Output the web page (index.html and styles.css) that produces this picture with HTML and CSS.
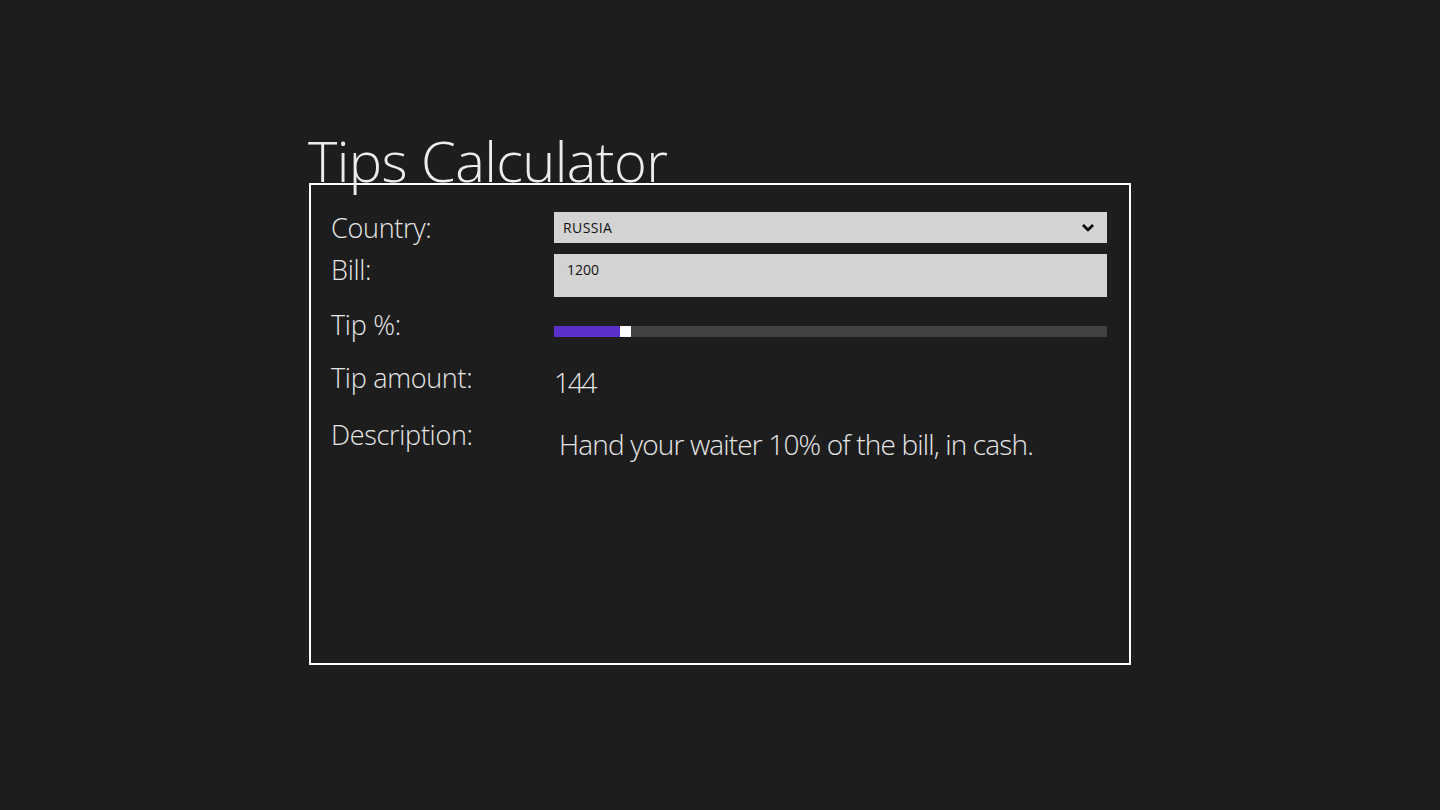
FILE: index.html
```html
<!DOCTYPE html>
<html>
<head>
<meta charset="utf-8">
<link rel="stylesheet" href="styles.css">
</head>
<body>
<main class="page">
  <h1 class="title">Tips Calculator</h1>
  <section class="panel">
    <div class="row row-country">
      <div class="label">Country:</div>
      <div class="select">
        <span class="select-text">RUSSIA</span>
        <svg class="chevron" width="14" height="10" viewBox="0 0 14 10"><path d="M2 2 L7 7 L12 2" fill="none" stroke="#000" stroke-width="2.6"/></svg>
      </div>
    </div>
    <div class="row row-bill">
      <div class="label">Bill:</div>
      <div class="input">1200</div>
    </div>
    <div class="row row-tip">
      <div class="label">Tip %:</div>
      <div class="slider">
        <div class="slider-fill" style="width:66px"></div>
        <div class="slider-thumb"></div>
        <div class="slider-rest"></div>
      </div>
    </div>
    <div class="row row-amount">
      <div class="label">Tip amount:</div>
      <div class="amount">144</div>
    </div>
    <div class="row row-desc">
      <div class="label">Description:</div>
      <div class="desc">Hand your waiter 10% of the bill, in cash.</div>
    </div>
  </section>
</main>
</body>
</html>
```
FILE: styles.css
```css
html, body {
  margin: 0;
  padding: 0;
  background: #1d1d1d;
  height: 100%;
}
body {
  font-family: "Open Sans", "Segoe UI", sans-serif;
  color: #e6e6e6;
}
.page {
  padding-top: 130px;
  padding-left: 309px;
  width: 822px;
}
.title {
  margin: 0 0 0 -1px;
  font-weight: 300;
  font-size: 56px;
  line-height: 60px;
  height: 53px;
  color: #ececec;
  letter-spacing: -0.6px;
  white-space: nowrap;
}
.panel {
  border: 2px solid #ffffff;
  height: 482px;
  box-sizing: border-box;
  padding: 27px 22px 0 20px;
}
.row {
  display: grid;
  grid-template-columns: 223px 1fr;
}
.label {
  font-weight: 300;
  font-size: 27px;
  line-height: 32px;
  color: #e6e6e6;
  letter-spacing: -0.3px;
}
.select {
  height: 31px;
  background: #d3d3d3;
  display: flex;
  align-items: center;
  justify-content: space-between;
  padding: 0 12px 0 9px;
  box-sizing: border-box;
}
.select-text {
  font-size: 14px;
  color: #111;
  font-weight: 400;
  letter-spacing: 0.4px;
}
.chevron { display: block; }
.row-bill { margin-top: 10px; }
.input {
  height: 43px;
  background: #d3d3d3;
  box-sizing: border-box;
  padding: 7px 13px;
  font-size: 14px;
  line-height: 18px;
  color: #111;
}
.row-tip { margin-top: 12px; }
.slider {
  margin-top: 17px;
  height: 11px;
  display: flex;
}
.slider-fill { background: #5b2fc9; }
.slider-thumb { width: 11px; background: #ffffff; }
.slider-rest { flex: 1; background: #424242; }
.row-amount { margin-top: 21px; }
.amount {
  font-weight: 300;
  font-size: 28px;
  line-height: 32px;
  margin-top: 4px;
  color: #e6e6e6;
  letter-spacing: -2.2px;
}
.row-desc { margin-top: 21px; }
.desc {
  font-weight: 300;
  font-size: 28px;
  line-height: 32px;
  margin-top: 9px;
  padding-left: 5px;
  color: #e6e6e6;
  letter-spacing: -0.85px;
}
```
